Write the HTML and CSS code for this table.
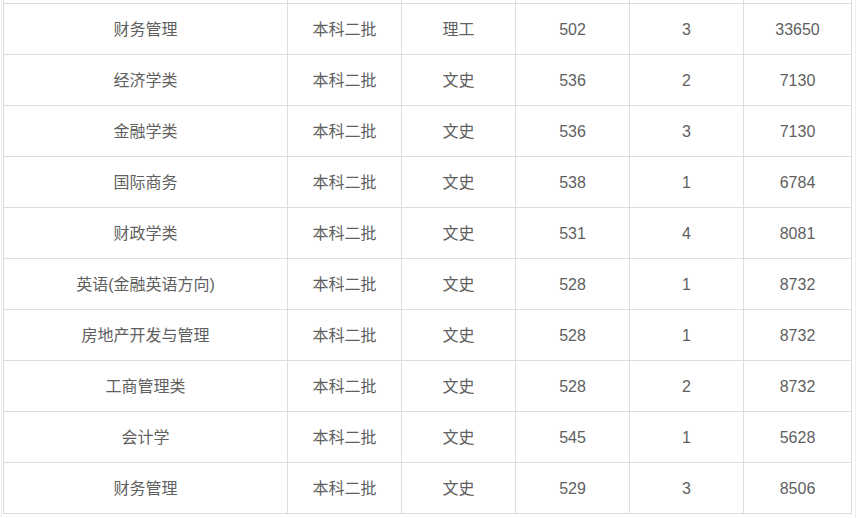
FILE: index.html
```html
<!DOCTYPE html>
<html lang="zh">
<head>
<meta charset="utf-8">
<link rel="stylesheet" href="styles.css">
</head>
<body>
<div class="frame">
<table class="grid">
<colgroup>
<col class="c-major"><col class="c-mid"><col class="c-mid"><col class="c-mid"><col class="c-mid"><col class="c-last">
</colgroup>
<tbody>
<tr class="ghost"><td></td><td></td><td></td><td></td><td></td><td></td></tr>
<tr><td>财务管理</td><td>本科二批</td><td>理工</td><td>502</td><td>3</td><td>33650</td></tr>
<tr><td>经济学类</td><td>本科二批</td><td>文史</td><td>536</td><td>2</td><td>7130</td></tr>
<tr><td>金融学类</td><td>本科二批</td><td>文史</td><td>536</td><td>3</td><td>7130</td></tr>
<tr><td>国际商务</td><td>本科二批</td><td>文史</td><td>538</td><td>1</td><td>6784</td></tr>
<tr><td>财政学类</td><td>本科二批</td><td>文史</td><td>531</td><td>4</td><td>8081</td></tr>
<tr><td>英语(金融英语方向)</td><td>本科二批</td><td>文史</td><td>528</td><td>1</td><td>8732</td></tr>
<tr><td>房地产开发与管理</td><td>本科二批</td><td>文史</td><td>528</td><td>1</td><td>8732</td></tr>
<tr><td>工商管理类</td><td>本科二批</td><td>文史</td><td>528</td><td>2</td><td>8732</td></tr>
<tr><td>会计学</td><td>本科二批</td><td>文史</td><td>545</td><td>1</td><td>5628</td></tr>
<tr><td>财务管理</td><td>本科二批</td><td>文史</td><td>529</td><td>3</td><td>8506</td></tr>
</tbody>
</table>
</div>
</body>
</html>
```
FILE: styles.css
```css
html, body {
  margin: 0;
  padding: 0;
  background: #ffffff;
}
body {
  font-family: "Liberation Sans", "Noto Sans CJK SC", sans-serif;
  font-size: 16px;
  color: #5f5f5f;
}
.frame {
  box-sizing: border-box;
  height: 518px;
  width: 855px;
  margin-left: 1px;
  border-left: 1px solid #eeeeee;
  border-right: 1px solid #eeeeee;
  padding-left: 1px;
  overflow: hidden;
}
.grid {
  border-collapse: collapse;
  table-layout: fixed;
  width: 849px;
  margin-top: -48px;
}
.c-major { width: 284px; }
.c-mid { width: 114px; }
.c-last { width: 108px; }
.grid td {
  border: 1px solid #dddddd;
  height: 49px;
  padding: 1px 0 0;
  text-align: center;
  vertical-align: middle;
  line-height: 20px;
}
```
